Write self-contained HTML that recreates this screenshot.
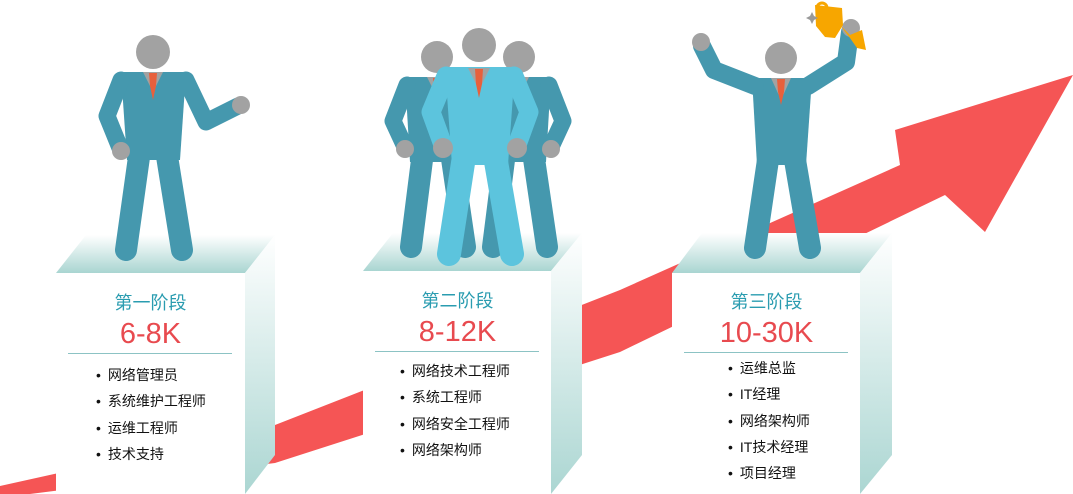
<!DOCTYPE html>
<html><head><meta charset="utf-8"><style>
html,body{margin:0;padding:0;background:#fff;width:1073px;height:494px;overflow:hidden;position:relative;font-family:"Liberation Sans","Noto Sans CJK SC",sans-serif}
svg{position:absolute;left:0;top:0}
.t{position:absolute;text-align:center;width:189px}
.st{color:#2a9cb0;font-size:18px}
.sal{color:#e84a4f;font-size:29px;line-height:34px}
.hr{position:absolute;height:1px;background:#8cc3c4}
ul{position:absolute;margin:0;padding:0;list-style:none;font-size:14px;color:#111}
li{line-height:26.3px}
li:before{content:"•";margin-right:7px}
</style></head><body>
<svg width="1073" height="494" viewBox="0 0 1073 494">
<defs>
<linearGradient id="tg" x1="0" y1="0" x2="0" y2="1"><stop offset="0" stop-color="#fff"/><stop offset="1" stop-color="#a9d5d1"/></linearGradient>
<linearGradient id="sg" x1="0" y1="0" x2="0" y2="1"><stop offset="0" stop-color="#fff"/><stop offset="1" stop-color="#abd6d2"/></linearGradient>
<g id="p">
<line x1="-14" y1="95" x2="-26" y2="190" stroke-width="22" stroke-linecap="round"/>
<line x1="14" y1="95" x2="28" y2="190" stroke-width="22" stroke-linecap="round"/>
<path d="M-32,20 L32,20 L27,105 L-27,105 Z" stroke="none"/>
<polyline points="-30,28 -44,64 -32,90" fill="none" stroke-width="17" stroke-linejoin="round" stroke-linecap="round"/>
<polyline points="30,28 44,64 32,90" fill="none" stroke-width="17" stroke-linejoin="round" stroke-linecap="round"/>
<circle cx="-32" cy="92" r="9" fill="#a2a2a2" stroke="none"/>
<circle cx="32" cy="92" r="9" fill="#a2a2a2" stroke="none"/>
<circle cx="0" cy="0" r="16" fill="#a2a2a2" stroke="none"/>
<path d="M-10,20 L10,20 L0,40 Z" fill="#a2a2a2" stroke="none"/>
<path d="M-4,21 L4,21 L3,32 L0,42 L-3,32 Z" fill="#e8603c" stroke="none"/>
</g>
</defs>
<path d="M0,486 L275,425 L620,290 L900,165 L895,130 L1073,75 L985,232 L945,195 L620,352 L275,463 L30,494 L0,494 Z" fill="#f55555"/>
<g>
<path d="M56,273 L245,273 L275,235 L86,235 Z" fill="url(#tg)"/>
<path d="M245,273 L275,235 L275,455 L245,494 Z" fill="url(#sg)"/>
<rect x="56" y="273" width="189" height="221" fill="#fff"/>
<path d="M363,271 L551,271 L582,233 L393,233 Z" fill="url(#tg)"/>
<path d="M551,271 L582,233 L582,455 L551,494 Z" fill="url(#sg)"/>
<rect x="363" y="271" width="188" height="223" fill="#fff"/>
<path d="M672,273 L860,273 L892,233 L702,233 Z" fill="url(#tg)"/>
<path d="M860,273 L892,233 L892,455 L860,494 Z" fill="url(#sg)"/>
<rect x="672" y="273" width="188" height="221" fill="#fff"/>
</g>
<!-- figure 1 -->
<g fill="#4598ae" stroke="#4598ae">
<line x1="140" y1="150" x2="126" y2="250" stroke-width="22" stroke-linecap="round"/>
<line x1="166" y1="150" x2="182" y2="250" stroke-width="22" stroke-linecap="round"/>
<path d="M121,72 L186,72 L180,160 L127,160 Z" stroke="none"/>
<polyline points="121,80 107,116 120,148" fill="none" stroke-width="17" stroke-linejoin="round" stroke-linecap="round"/>
<polyline points="186,80 206,122 238,106" fill="none" stroke-width="17" stroke-linejoin="round" stroke-linecap="round"/>
<circle cx="121" cy="151" r="9" fill="#a2a2a2" stroke="none"/>
<circle cx="241" cy="105" r="9" fill="#a2a2a2" stroke="none"/>
<circle cx="153" cy="52" r="17" fill="#a2a2a2" stroke="none"/>
<path d="M143,72 L163,72 L153,92 Z" fill="#a2a2a2" stroke="none"/>
<path d="M149,73 L157,73 L156,86 L153,100 L150,86 Z" fill="#e8603c" stroke="none"/>
</g>
<!-- group -->
<use href="#p" x="437" y="57" fill="#4598ae" stroke="#4598ae"/>
<use href="#p" x="519" y="57" fill="#4598ae" stroke="#4598ae"/>
<g fill="#5cc4dd" stroke="#5cc4dd">
<line x1="465" y1="150" x2="449" y2="254" stroke-width="24" stroke-linecap="round"/>
<line x1="494" y1="150" x2="512" y2="254" stroke-width="24" stroke-linecap="round"/>
<path d="M445,67 L515,67 L508,165 L452,165 Z" stroke="none"/>
<polyline points="446,76 431,112 443,145" fill="none" stroke-width="19" stroke-linejoin="round" stroke-linecap="round"/>
<polyline points="514,76 529,112 517,145" fill="none" stroke-width="19" stroke-linejoin="round" stroke-linecap="round"/>
<circle cx="443" cy="148" r="10" fill="#a2a2a2" stroke="none"/>
<circle cx="517" cy="148" r="10" fill="#a2a2a2" stroke="none"/>
<circle cx="479" cy="45" r="17" fill="#a2a2a2" stroke="none"/>
<path d="M468,68 L490,68 L479,90 Z" fill="#a2a2a2" stroke="none"/>
<path d="M475,69 L483,69 L482,84 L479,98 L476,84 Z" fill="#e8603c" stroke="none"/>
</g>
<!-- figure 3 -->
<g fill="#4598ae" stroke="#4598ae">
<line x1="768" y1="160" x2="755" y2="248" stroke-width="22" stroke-linecap="round"/>
<line x1="795" y1="160" x2="810" y2="248" stroke-width="22" stroke-linecap="round"/>
<path d="M752,78 L812,78 L806,165 L757,165 Z" stroke="none"/>
<polyline points="755,86 714,70 702,46" fill="none" stroke-width="18" stroke-linejoin="round" stroke-linecap="round"/>
<polyline points="808,86 846,62 850,32" fill="none" stroke-width="18" stroke-linejoin="round" stroke-linecap="round"/>
<circle cx="701" cy="42" r="9" fill="#a2a2a2" stroke="none"/>
<circle cx="851" cy="28" r="9" fill="#a2a2a2" stroke="none"/>
<circle cx="781" cy="58" r="16" fill="#a2a2a2" stroke="none"/>
<path d="M771,78 L791,78 L781,100 Z" fill="#a2a2a2" stroke="none"/>
<path d="M777,79 L785,79 L784,92 L781,105 L778,92 Z" fill="#e8603c" stroke="none"/>
</g>
<g fill="#f7a600">
<path d="M815,5 L842,8 L843,25 L835,38 L825,37 L816,26 Z"/>
<path d="M840,25 L850,35 L862,30 L866,50 L857,48 L850,38 Z"/>
<circle cx="822" cy="8" r="5" fill="none" stroke="#f7a600" stroke-width="3"/>
</g>
<path d="M812,12 l2,4 4,2 -4,2 -2,4 -2,-4 -4,-2 4,-2z" fill="#999"/>
</svg>
<div class="t st" style="left:56px;top:289px">第一阶段</div>
<div class="t sal" style="left:56px;top:317px">6-8K</div>
<div class="hr" style="left:68px;top:353px;width:164px"></div>
<ul style="left:96px;top:362px"><li>网络管理员</li><li>系统维护工程师</li><li>运维工程师</li><li>技术支持</li></ul>
<div class="t st" style="left:363px;top:287px">第二阶段</div>
<div class="t sal" style="left:363px;top:315px">8-12K</div>
<div class="hr" style="left:375px;top:351px;width:164px"></div>
<ul style="left:400px;top:358px"><li>网络技术工程师</li><li>系统工程师</li><li>网络安全工程师</li><li>网络架构师</li></ul>
<div class="t st" style="left:672px;top:288px">第三阶段</div>
<div class="t sal" style="left:672px;top:316px">10-30K</div>
<div class="hr" style="left:684px;top:352px;width:164px"></div>
<ul style="left:728px;top:355px"><li>运维总监</li><li>IT经理</li><li>网络架构师</li><li>IT技术经理</li><li>项目经理</li></ul>
</body></html>
